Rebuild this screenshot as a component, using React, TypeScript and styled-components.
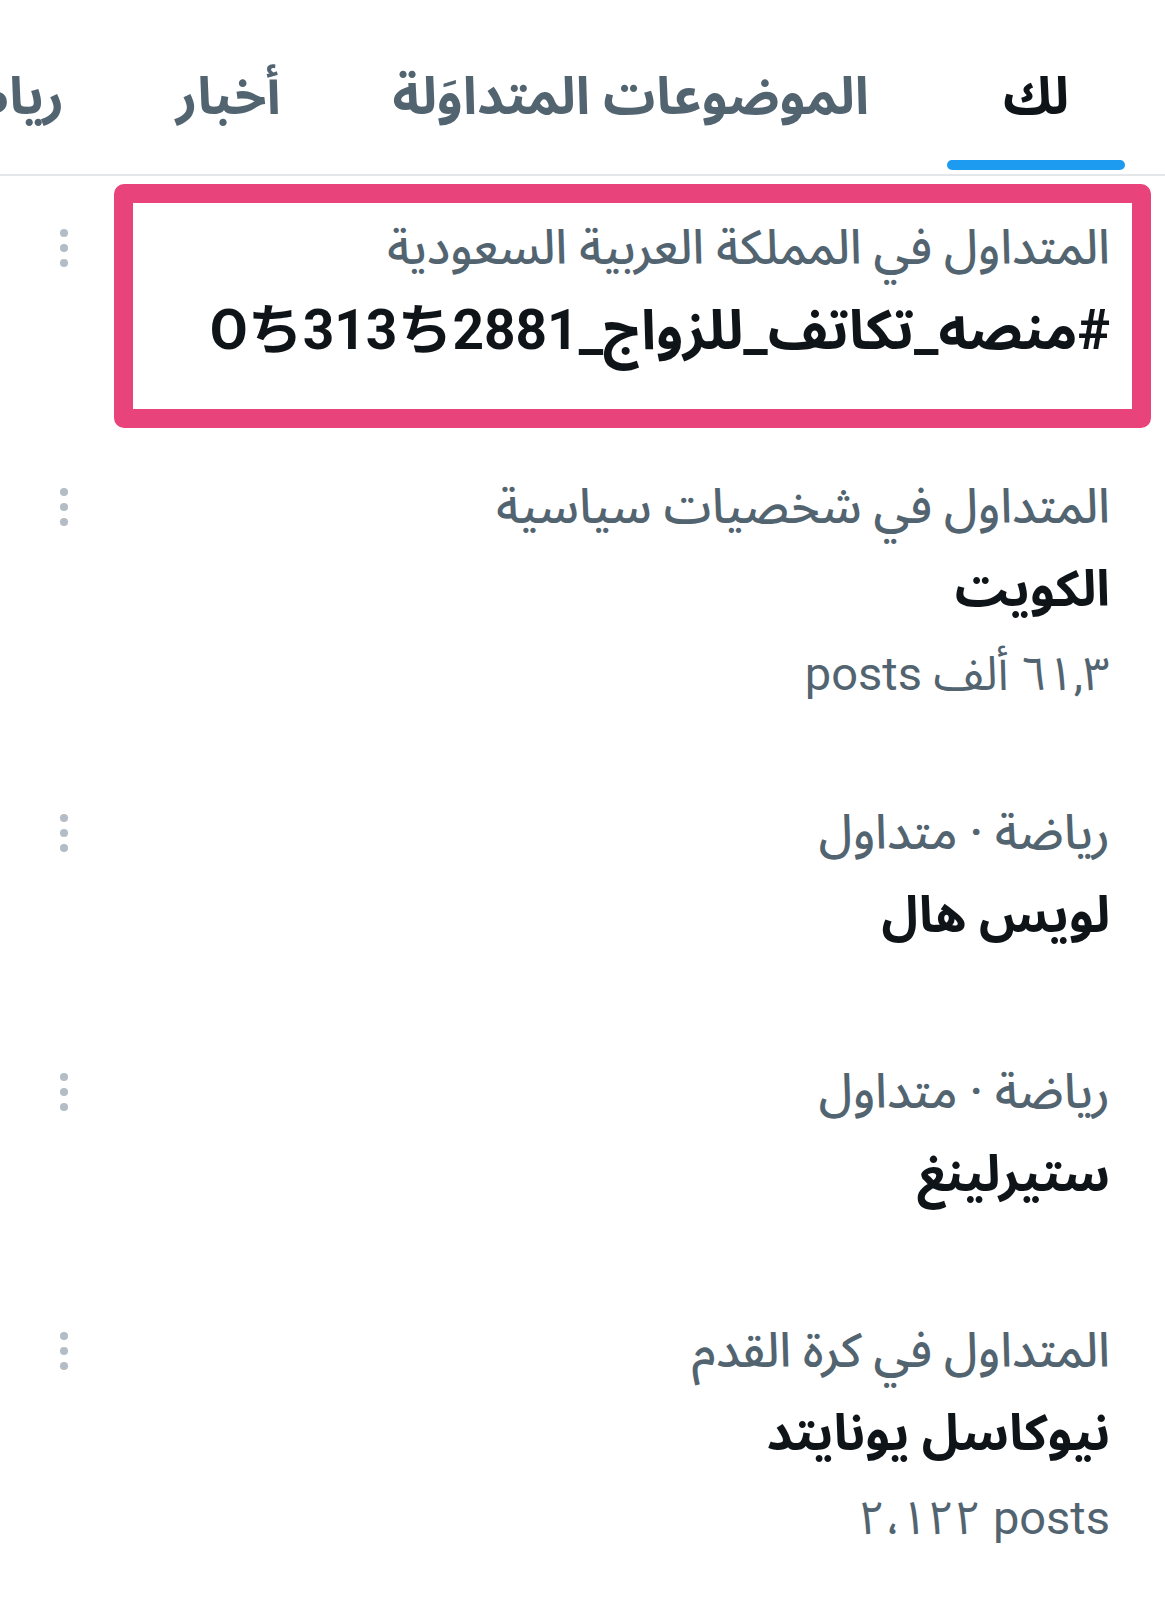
import React from 'react'
import styled, { createGlobalStyle } from 'styled-components'

type Trend = {
  id: number
  category: string
  title: string
  posts?: string
  marked?: boolean
}

const trends: Trend[] = [
  {
    id: 1,
    category: 'المتداول في المملكة العربية السعودية',
    title: '#منصه_تكاتف_للزواج_Oち313ち2881',
    marked: true,
  },
  {
    id: 2,
    category: 'المتداول في شخصيات سياسية',
    title: 'الكويت',
    posts: '٦١,٣ ألف posts',
  },
  { id: 3, category: 'رياضة · متداول', title: 'لويس هال' },
  { id: 4, category: 'رياضة · متداول', title: 'ستيرلينغ' },
  {
    id: 5,
    category: 'المتداول في كرة القدم',
    title: 'نيوكاسل يونايتد',
    posts: '٢،١٢٢ posts',
  },
]

const tabs = ['لك', 'الموضوعات المتداوَلة', 'أخبار', 'رياضة', 'ترفيه']

const GlobalStyle = createGlobalStyle`
  html, body {
    margin: 0;
    padding: 0;
    background: #ffffff;
  }
  body {
    font-family: Roboto, "Noto Sans Arabic", "DejaVu Sans", "Noto Sans CJK JP", sans-serif;
    color: #0f1419;
  }
`

const Page = styled.div`
  width: 1165px;
  min-height: 1600px;
  overflow: hidden;
  direction: rtl;
`

const TabBar = styled.nav`
  display: flex;
  height: 176px;
  padding: 34px 40px 0 0;
  box-sizing: border-box;
  border-bottom: 2px solid #e3e7ea;
  white-space: nowrap;
  overflow: hidden;
`

const Tab = styled.div<{ $active?: boolean }>`
  display: flex;
  flex-direction: column;
  flex-shrink: 0;
  padding: 0 56px;
  font-size: 52px;
  font-weight: 700;
  color: ${(p) => (p.$active ? '#0f1419' : '#536471')};

  &:first-child {
    margin-left: 22px;
  }
`

const TabLabel = styled.div`
  flex: 1;
  display: flex;
  align-items: center;
  justify-content: center;
`

const Indicator = styled.div<{ $active?: boolean }>`
  height: 10px;
  margin: 0 -56px 4px;
  border-radius: 5px;
  background: ${(p) => (p.$active ? '#1d9bf0' : 'transparent')};
`

const List = styled.div`
  padding-top: 12px;
`

const Item = styled.div<{ $hasPosts?: boolean }>`
  position: relative;
  display: flex;
  align-items: flex-start;
  padding: 20px 55px ${(p) => (p.$hasPosts ? 56 : 75)}px 0;
`

const Content = styled.div`
  flex: 1;
  min-width: 0;
`

const Category = styled.div`
  height: 80px;
  line-height: 80px;
  font-size: 48px;
  font-weight: 500;
  color: #536471;
  white-space: nowrap;
`

const Title = styled.div<{ $tag?: boolean }>`
  height: 84px;
  line-height: 84px;
  font-size: ${(p) => (p.$tag ? 55 : 50)}px;
  font-weight: 700;
  color: #0f1419;
  white-space: nowrap;
`

const Posts = styled.div`
  height: 86px;
  line-height: 86px;
  font-size: 47px;
  color: #536471;
  text-align: right;
  white-space: nowrap;
`

const More = styled.div`
  width: 128px;
  height: 80px;
  display: flex;
  flex-direction: column;
  align-items: center;
  justify-content: center;
  gap: 7px;
`

const Dot = styled.span`
  width: 8px;
  height: 8px;
  border-radius: 50%;
  background: #b4bcc5;
`

const Highlight = styled.div`
  position: absolute;
  top: -4px;
  bottom: 19px;
  left: 114px;
  right: 14px;
  border: 19px solid #e9437b;
  border-radius: 10px;
  pointer-events: none;
`

const App = () => {
  return (
    <>
      <GlobalStyle />
      <Page>
        <TabBar>
          {tabs.map((t, i) => (
            <Tab key={t} $active={i === 0}>
              <TabLabel>{t}</TabLabel>
              <Indicator $active={i === 0} />
            </Tab>
          ))}
        </TabBar>
        <List>
          {trends.map((trend) => (
            <Item key={trend.id} $hasPosts={!!trend.posts}>
              <Content>
                <Category>{trend.category}</Category>
                <Title $tag={trend.title.startsWith('#')}>{trend.title}</Title>
                {trend.posts && <Posts dir="auto">{trend.posts}</Posts>}
              </Content>
              <More>
                <Dot />
                <Dot />
                <Dot />
              </More>
              {trend.marked && <Highlight />}
            </Item>
          ))}
        </List>
      </Page>
    </>
  )
}

export default App
